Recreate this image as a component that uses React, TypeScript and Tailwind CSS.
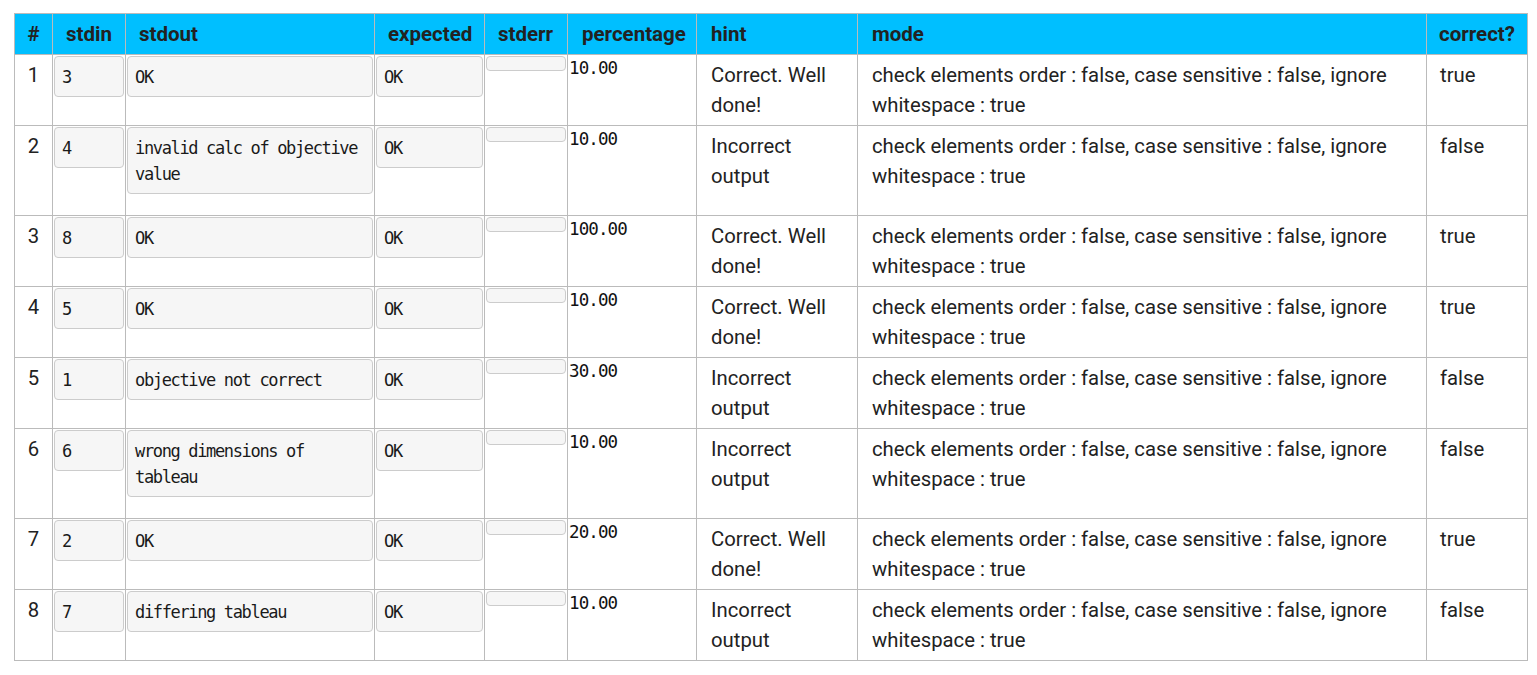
import React from "react";

type Row = {
  n: number;
  stdin: string;
  stdout: string;
  pct: string;
  ok: boolean;
};

const rows: Row[] = [
  { n: 1, stdin: "3", stdout: "OK", pct: "10.00", ok: true },
  { n: 2, stdin: "4", stdout: "invalid calc of objective value", pct: "10.00", ok: false },
  { n: 3, stdin: "8", stdout: "OK", pct: "100.00", ok: true },
  { n: 4, stdin: "5", stdout: "OK", pct: "10.00", ok: true },
  { n: 5, stdin: "1", stdout: "objective not correct", pct: "30.00", ok: false },
  { n: 6, stdin: "6", stdout: "wrong dimensions of tableau", pct: "10.00", ok: false },
  { n: 7, stdin: "2", stdout: "OK", pct: "20.00", ok: true },
  { n: 8, stdin: "7", stdout: "differing tableau", pct: "10.00", ok: false },
];

const sans = "font-['Roboto','Liberation_Sans',sans-serif]";

function Box({ text }: { text: string }) {
  return (
    <div className="mb-[20px] rounded-[4px] border border-[#cccccc] bg-[#f6f6f6] pl-[7px] pr-[6px] pt-[7px] pb-[6px] font-['DejaVu_Sans_Mono',monospace] text-[17px] tracking-[-1.35px] leading-[26px] text-[#1a1a1a] whitespace-pre-wrap break-words">
      {text}
    </div>
  );
}

export default function App() {
  const th = "border border-[#bbbbbb] px-[14px] text-left align-middle font-bold";
  const td = "border border-[#bbbbbb] align-top";
  return (
    <div className={`bg-white min-h-[675px] pt-[13px] pl-[14px] ${sans}`}>
      <table className="table-fixed border-collapse w-[1513px] text-[#222] text-[20.3px]">
        <colgroup>
          <col className="w-[38px]" />
          <col className="w-[73px]" />
          <col className="w-[249px]" />
          <col className="w-[110px]" />
          <col className="w-[83px]" />
          <col className="w-[129px]" />
          <col className="w-[161px]" />
          <col className="w-[569px]" />
          <col className="w-[101px]" />
        </colgroup>
        <thead>
          <tr className="bg-[#00bfff] h-[41px] text-[20.5px] leading-[24px]">
            <th className="border border-[#bbbbbb] text-center font-bold">#</th>
            <th className={`${th} !px-[13px]`}>stdin</th>
            <th className={`${th} !px-[13px]`}>stdout</th>
            <th className={`${th} !px-[13px]`}>expected</th>
            <th className={`${th} !px-[13px]`}>stderr</th>
            <th className={th}>percentage</th>
            <th className={th}>hint</th>
            <th className={th}>mode</th>
            <th className={`${th} !px-[12px]`}>correct?</th>
          </tr>
        </thead>
        <tbody>
          {rows.map((r) => (
            <tr key={r.n}>
              <td className={`${td} text-center pt-[5px] pb-[5px] leading-[30px]`}>{r.n}</td>
              <td className={`${td} p-[1px]`}>
                <Box text={r.stdin} />
              </td>
              <td className={`${td} p-[1px]`}>
                <Box text={r.stdout} />
              </td>
              <td className={`${td} p-[1px]`}>
                <Box text="OK" />
              </td>
              <td className={`${td} p-[1px]`}>
                <Box text="" />
              </td>
              <td className={`${td} p-[1px] pt-[2px]`}>
                <div className="font-['DejaVu_Sans_Mono',monospace] text-[17.5px] tracking-[-0.9px] leading-[22px] text-[#111]">{r.pct}</div>
              </td>
              <td className={`${td} px-[14px] pt-[5px] pb-[5px] leading-[30px]`}>
                {r.ok ? "Correct. Well done!" : "Incorrect output"}
              </td>
              <td className={`${td} px-[14px] pt-[5px] pb-[5px] leading-[30px]`}>
                check elements order : false, case sensitive : false, ignore whitespace : true
              </td>
              <td className={`${td} px-[13px] pt-[5px] pb-[5px] leading-[30px]`}>
                {r.ok ? "true" : "false"}
              </td>
            </tr>
          ))}
        </tbody>
      </table>
    </div>
  );
}
